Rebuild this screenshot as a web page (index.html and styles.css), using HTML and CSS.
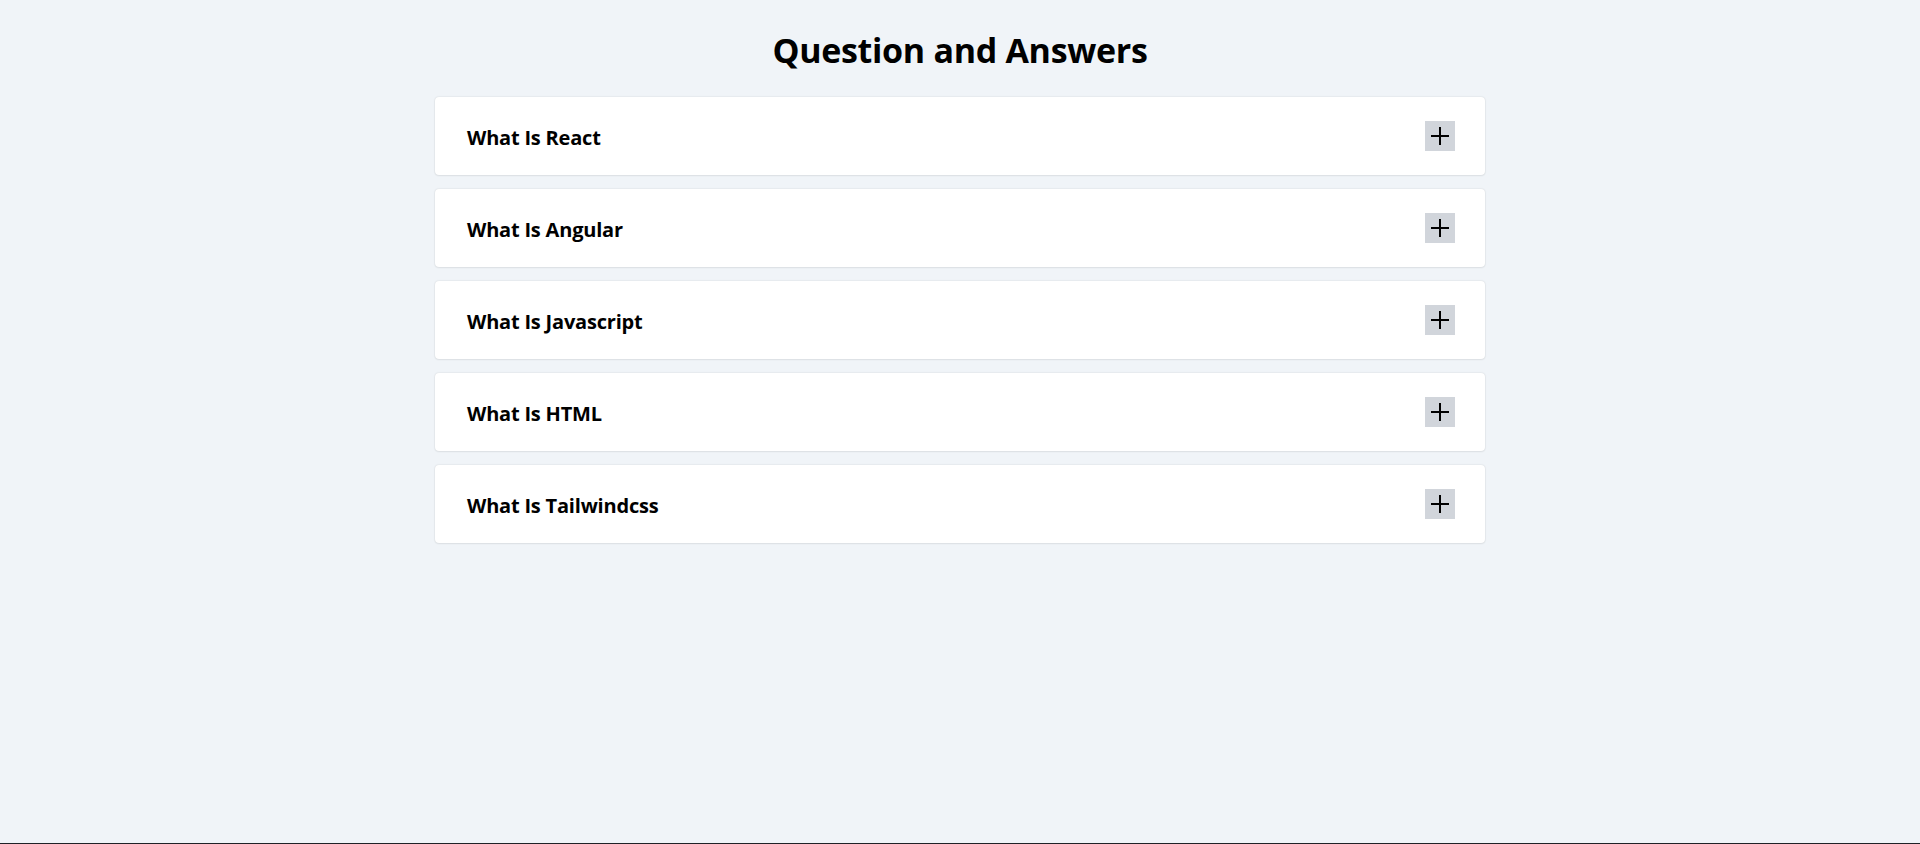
FILE: index.html
```html
<!DOCTYPE html>
<html lang="en">
<head>
<meta charset="utf-8">
<title>Question and Answers</title>
<link rel="stylesheet" href="styles.css">
</head>
<body>
<main class="page">
  <h1 class="title">Question and Answers</h1>
  <section class="faq">
    <div class="item">
      <h2 class="question">What Is React</h2>
      <button class="toggle" aria-label="Expand">
        <svg viewBox="0 0 18 18" width="18" height="18"><path d="M9 0v18M0 9h18" stroke="#000" stroke-width="2" fill="none"/></svg>
      </button>
    </div>
    <div class="item">
      <h2 class="question">What Is Angular</h2>
      <button class="toggle" aria-label="Expand">
        <svg viewBox="0 0 18 18" width="18" height="18"><path d="M9 0v18M0 9h18" stroke="#000" stroke-width="2" fill="none"/></svg>
      </button>
    </div>
    <div class="item">
      <h2 class="question">What Is Javascript</h2>
      <button class="toggle" aria-label="Expand">
        <svg viewBox="0 0 18 18" width="18" height="18"><path d="M9 0v18M0 9h18" stroke="#000" stroke-width="2" fill="none"/></svg>
      </button>
    </div>
    <div class="item">
      <h2 class="question">What Is HTML</h2>
      <button class="toggle" aria-label="Expand">
        <svg viewBox="0 0 18 18" width="18" height="18"><path d="M9 0v18M0 9h18" stroke="#000" stroke-width="2" fill="none"/></svg>
      </button>
    </div>
    <div class="item">
      <h2 class="question">What Is Tailwindcss</h2>
      <button class="toggle" aria-label="Expand">
        <svg viewBox="0 0 18 18" width="18" height="18"><path d="M9 0v18M0 9h18" stroke="#000" stroke-width="2" fill="none"/></svg>
      </button>
    </div>
  </section>
</main>
</body>
</html>
```
FILE: styles.css
```css
* { box-sizing: border-box; }
html, body { margin: 0; padding: 0; }
body {
  background: #f0f4f8;
  font-family: "Open Sans", "Noto Sans", sans-serif;
  color: #000;
}
.page {
  min-height: 100vh;
  padding-top: 30px;
  border-bottom: 1px solid #1f2126;
  display: flex;
  flex-direction: column;
  align-items: center;
}
.title {
  margin: 0 0 27px;
  font-size: 34px;
  line-height: 40px;
  font-weight: 700;
  letter-spacing: -0.3px;
}
.faq {
  width: 1050px;
  display: flex;
  flex-direction: column;
  gap: 14px;
}
.item {
  background: #fff;
  border-radius: 4px;
  box-shadow: 0 0 2px rgba(0,0,0,0.14), 0 1px 2px rgba(0,0,0,0.05);
  padding: 24px 30px 24px 32px;
  display: flex;
  align-items: center;
  justify-content: space-between;
}
.question {
  margin: 0;
  padding-top: 3px;
  font-size: 20px;
  line-height: 27px;
  font-weight: 700;
  letter-spacing: -0.2px;
}
.toggle {
  width: 30px;
  height: 30px;
  border: 0;
  padding: 0;
  background: #d1d5db;
  display: flex;
  align-items: center;
  justify-content: center;
  cursor: pointer;
}
.toggle svg { display: block; }
```
